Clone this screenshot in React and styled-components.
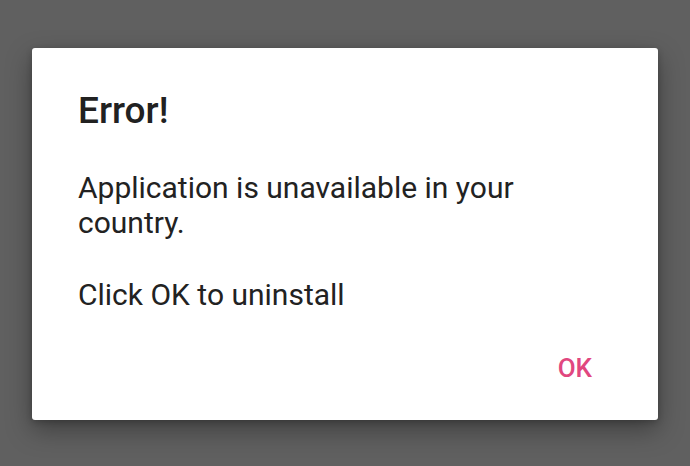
import React from 'react'
import styled, { createGlobalStyle } from 'styled-components'

const GlobalStyle = createGlobalStyle`
  html, body {
    margin: 0;
    background: #606060;
  }
  body {
    font-family: Roboto, "Noto Sans", sans-serif;
  }
`

const Overlay = styled.div`
  width: 690px;
  height: 466px;
  box-sizing: border-box;
  padding: 48px 32px;
  display: flex;
  align-items: flex-start;
  justify-content: center;
`

const Dialog = styled.div`
  width: 626px;
  box-sizing: border-box;
  background: #ffffff;
  border-radius: 3px;
  padding: 41px 46px 37px 46px;
  box-shadow: 0 10px 26px rgba(0, 0, 0, 0.35), 0 2px 6px rgba(0, 0, 0, 0.2);
  display: flex;
  flex-direction: column;
`

const Title = styled.h2`
  margin: 0;
  font-size: 37px;
  line-height: 43px;
  font-weight: 500;
  color: #212121;
`

const Message = styled.p`
  margin: ${(p) => (p.$first ? '38px' : '37px')} 0 0 0;
  font-size: 30px;
  line-height: 35px;
  font-weight: 400;
  color: #222222;
  max-width: 470px;
`

const Actions = styled.div`
  margin-top: 41px;
  display: flex;
  justify-content: flex-end;
  margin-right: 20px;
`

const TextButton = styled.button`
  border: none;
  background: none;
  padding: 0;
  font-family: Roboto, "Noto Sans", sans-serif;
  font-size: 26px;
  line-height: 30px;
  font-weight: 500;
  color: #e1477f;
  cursor: pointer;
`

function App() {
  return (
    <>
      <GlobalStyle />
      <Overlay>
        <Dialog>
          <Title>Error!</Title>
          <Message $first>Application is unavailable in your country.</Message>
          <Message>Click OK to uninstall</Message>
          <Actions>
            <TextButton>OK</TextButton>
          </Actions>
        </Dialog>
      </Overlay>
    </>
  )
}

export default App
